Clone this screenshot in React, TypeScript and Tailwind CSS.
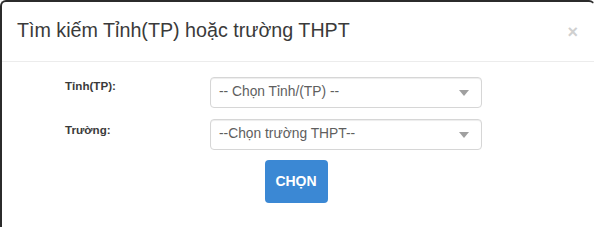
export default function App() {
  return (
    <div className="w-[600px] h-[227px] bg-white overflow-hidden font-['Liberation_Sans',Arial,sans-serif]">
      <div className="w-[595px] h-[240px] border-l-2 border-t-2 border-r border-[#2b2b2b] border-r-white rounded-t-[6px] bg-white">
        {/* Header */}
        <div className="h-[60px] flex items-center justify-between pl-[15px] pr-[16px] border-b border-[#ececec]">
          <h4 className="text-[19.7px] leading-none text-[#3a3a3a] pb-[1px]">Tìm kiếm Tỉnh(TP) hoặc trường THPT</h4>
          <button className="text-[18px] leading-none font-bold text-[#d0d0d0] mt-[1px]">×</button>
        </div>

        {/* Body */}
        <div className="pt-[15px] pl-[63px]">
          <div className="flex items-start">
            <label className="w-[145px] pt-[1px] text-[11.6px] leading-4 font-bold text-[#3a3a3a]">Tỉnh(TP):</label>
            <SelectBox text="-- Chọn Tỉnh/(TP) --" />
          </div>
          <div className="flex items-start mt-[11px]">
            <label className="w-[145px] pt-[3px] text-[11.6px] leading-4 font-bold text-[#3a3a3a]">Trường:</label>
            <SelectBox text="--Chọn trường THPT--" />
          </div>
        </div>

        <div className="flex justify-center mt-[10px] pr-[4px]">
          <button className="w-[63px] h-[43px] rounded-[4px] bg-[#3b88d4] text-white text-[14px] font-bold">
            CHỌN
          </button>
        </div>
      </div>
    </div>
  );
}

function SelectBox({ text }: { text: string }) {
  return (
    <div className="w-[272px] h-[31px] flex items-center justify-between pl-[8px] pr-[12px] border border-[#d6d6d6] rounded-[4px] shadow-[inset_0_1px_1px_rgba(0,0,0,0.075)] bg-white">
      <span className="text-[13.8px] text-[#5e5e5e]">{text}</span>
      <svg width="10" height="6" viewBox="0 0 10 6" className="mt-[1px]">
        <path d="M0 0 L10 0 L5 6 Z" fill="#a0a0a0" />
      </svg>
    </div>
  );
}
